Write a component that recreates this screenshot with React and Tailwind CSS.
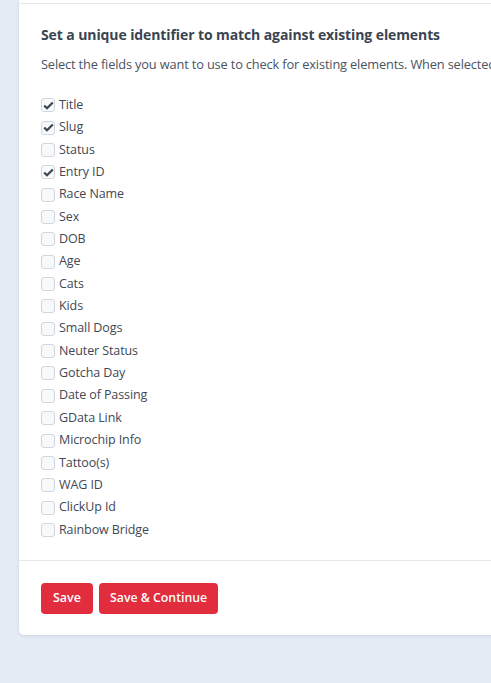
const fields = [
  { label: "Title", checked: true },
  { label: "Slug", checked: true },
  { label: "Status", checked: false },
  { label: "Entry ID", checked: true },
  { label: "Race Name", checked: false },
  { label: "Sex", checked: false },
  { label: "DOB", checked: false },
  { label: "Age", checked: false },
  { label: "Cats", checked: false },
  { label: "Kids", checked: false },
  { label: "Small Dogs", checked: false },
  { label: "Neuter Status", checked: false },
  { label: "Gotcha Day", checked: false },
  { label: "Date of Passing", checked: false },
  { label: "GData Link", checked: false },
  { label: "Microchip Info", checked: false },
  { label: "Tattoo(s)", checked: false },
  { label: "WAG ID", checked: false },
  { label: "ClickUp Id", checked: false },
  { label: "Rainbow Bridge", checked: false },
]

function Checkbox({ checked }) {
  return (
    <span className="w-[14px] h-[14px] shrink-0 rounded-[3px] border border-[#cfd6df] bg-[#f7f9fb] flex items-center justify-center">
      {checked && (
        <svg width="11" height="9" viewBox="0 0 11 9">
          <path d="M1.2 4.6 L4 7.3 L9.8 1.4" fill="none" stroke="#3f4753" strokeWidth="2.2" />
        </svg>
      )}
    </span>
  )
}

export default function App() {
  return (
    <div className="min-h-[683px] bg-[#e4ebf4] pl-[19px] overflow-hidden" style={{ fontFamily: '"Open Sans", "Noto Sans", sans-serif' }}>
      <div className="bg-white rounded-bl-[5px] shadow-[0_1px_3px_rgba(40,60,90,0.12)] w-[520px]">
        {/* top strip */}
        <div className="h-[4px] border-b border-[#e6eaef]" />

        <div className="pl-[22px] pt-[21px] pb-[19px] border-b border-[#e6eaef]">
          <h2 className="text-[14px] leading-[20px] font-bold text-[#3b4451] tracking-[-0.1px] whitespace-nowrap">
            Set a unique identifier to match against existing elements
          </h2>
          <p className="mt-[10px] text-[12.8px] leading-[18px] text-[#4a5361] whitespace-nowrap tracking-[-0.15px]">
            Select the fields you want to use to check for existing elements. When selected
          </p>

          <div className="mt-[21px] flex flex-col">
            {fields.map((f) => (
              <label key={f.label} className="flex items-center gap-[4px] h-[22.37px] text-[12.5px] text-[#3f4855] tracking-[-0.1px]">
                <Checkbox checked={f.checked} />
                <span>{f.label}</span>
              </label>
            ))}
          </div>
        </div>

        <div className="pl-[22px] pt-[22px] pb-[21px] flex gap-[6px]">
          <button className="h-[31px] px-[12px] rounded-[4px] bg-[#e12d3e] text-white text-[12.5px] font-semibold">
            Save
          </button>
          <button className="h-[31px] px-[11px] rounded-[4px] bg-[#e12d3e] text-white text-[12.3px] font-semibold">
            Save &amp; Continue
          </button>
        </div>
      </div>
    </div>
  )
}
